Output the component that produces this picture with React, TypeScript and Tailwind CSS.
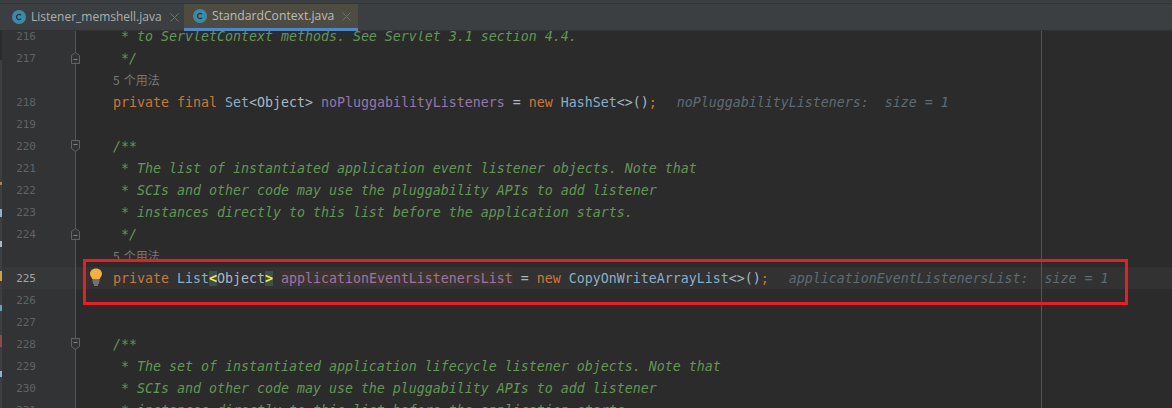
import React from "react";

const mono = "font-['DejaVu_Sans_Mono','Liberation_Mono',monospace]";

function FileIcon() {
  return (
    <svg width="14" height="14" viewBox="0 0 14 14" className="shrink-0">
      <circle cx="7" cy="7" r="7" fill="#3d8aa8" />
      <path d="M9 5.2A2.6 2.6 0 1 0 9 8.8" fill="none" stroke="#1f3a47" strokeWidth="1.3" />
    </svg>
  );
}

function CloseX() {
  return (
    <svg width="9" height="9" viewBox="0 0 9 9" className="shrink-0 block">
      <path d="M0.5 0.5L8.5 8.5M8.5 0.5L0.5 8.5" stroke="#6f7274" strokeWidth="1" />
    </svg>
  );
}

function Fold({ dir }: { dir: "up" | "down" }) {
  return (
    <svg width="9" height="12" viewBox="0 0 9 12" className="absolute left-[69px] top-[5px]">
      <path
        d={dir === "up" ? "M0.5 11.5V3.5L4.5 0.5L8.5 3.5V11.5Z" : "M0.5 0.5V8.5L4.5 11.5L8.5 8.5V0.5Z"}
        fill="#313335"
        stroke="#606366"
      />
      <path d={dir === "up" ? "M2.5 7.5H6.5" : "M2.5 4.5H6.5"} stroke="#808487" />
    </svg>
  );
}

function Bulb() {
  return (
    <svg width="14" height="18" viewBox="0 0 14 18" className="absolute left-[89px] top-[1px]">
      <path
        d="M7 0.5C3.3 0.5 1 3 1 5.8C1 8.4 3 9.6 3.6 11.5H10.4C11 9.6 13 8.4 13 5.8C13 3 10.7 0.5 7 0.5Z"
        fill="#f4af3d"
      />
      <path d="M3.5 13H10.5M4 15H10M5 17H9" stroke="#afb1b3" strokeWidth="1" />
    </svg>
  );
}

function Row({
  n,
  current,
  fold,
  children,
}: {
  n?: number;
  current?: boolean;
  fold?: "up" | "down";
  children?: React.ReactNode;
}) {
  return (
    <div className={`flex h-[22px] relative ${current ? "bg-[#323232]" : ""}`}>
      <div
        className={`w-[74px] shrink-0 border-r border-[#555555] h-full flex items-center pt-[2px] ${
          current ? "bg-[#353739]" : "bg-[#313335]"
        }`}
      >
        <span
          className={`w-[34px] text-right text-[11px] ${current ? "text-[#a4a3a3]" : "text-[#606366]"}`}
        >
          {n}
        </span>
      </div>
      {fold && <Fold dir={fold} />}
      <div className="pl-[37px] pt-[2px] h-full flex items-center text-[13.29px] text-[#a9b7c6]">
        <span className="whitespace-pre">{children}</span>
      </div>
    </div>
  );
}

const Doc = ({ t }: { t: string }) => <span className="italic text-[#629755]">{t}</span>;
const Kw = ({ t }: { t: string }) => <span className="text-[#cc7832]">{t}</span>;
const Cls = ({ t }: { t: string }) => <span className="text-[#88aecb]">{t}</span>;
const Field = ({ t }: { t: string }) => <span className="text-[#9876aa]">{t}</span>;
const Hint = ({ t }: { t: string }) => <span className="ml-5 italic text-[#5f6b73]">{t}</span>;
const Usage = () => (
  <div className="flex h-[22px]">
    <div className="w-[74px] shrink-0 border-r border-[#555555] bg-[#313335]" />
    <div className="pl-[37px] flex items-center gap-[4px] text-[12px] text-[#787878] font-['Noto_Sans_CJK_SC',sans-serif]">
      <span>5</span>
      <span>个用法</span>
    </div>
  </div>
);

export default function App() {
  return (
    <div className={`relative h-[408px] w-[1172px] overflow-hidden bg-[#2b2b2b] ${mono}`}>
      <div className="relative z-10 h-[31px] bg-[#3c3f41] border-t border-[#3c3f41]">
        <div className="h-px bg-[#323537] mt-[2px]" />
        <div className="flex h-[27px] border-b border-[#323232]">
          <div className="w-[184px] flex items-center pl-3 gap-[5px] font-['Open_Sans',sans-serif] text-[12px] text-[#a9afb3]">
            <FileIcon />
            <span>Listener_memshell.java</span>
            <span className="ml-[3px]"><CloseX /></span>
          </div>
          <div className="w-[174px] h-[27px] flex items-center pl-[9px] gap-[5px] bg-[#4e4c40] border-b-[3px] border-[#4a88c7] font-['Open_Sans',sans-serif] text-[12.2px] text-[#bbbbbb]">
            <FileIcon />
            <span>StandardContext.java</span>
            <span className="ml-[3px]"><CloseX /></span>
          </div>
        </div>
      </div>

      <div className="-mt-[6px] pl-[2px]">
        <Row n={216}><Doc t=" * to ServletContext methods. See Servlet 3.1 section 4.4." /></Row>
        <Row n={217} fold="up"><Doc t=" */" /></Row>
        <Usage />
        <Row n={218}>
          <Kw t="private final " /><Cls t="Set" />{"<Object> "}<Field t="noPluggabilityListeners" />
          {" = "}<Kw t="new " /><Cls t="HashSet" />{"<>()"}<Kw t=";" />
          <Hint t="noPluggabilityListeners:  size = 1" />
        </Row>
        <Row n={219} />
        <Row n={220} fold="down"><Doc t="/**" /></Row>
        <Row n={221}><Doc t=" * The list of instantiated application event listener objects. Note that" /></Row>
        <Row n={222}><Doc t=" * SCIs and other code may use the pluggability APIs to add listener" /></Row>
        <Row n={223}><Doc t=" * instances directly to this list before the application starts." /></Row>
        <Row n={224} fold="up"><Doc t=" */" /></Row>
        <Usage />
        <Row n={225} current>
          <Kw t="private " /><Cls t="List" />
          <span className="bg-[#3b514d] font-bold text-[#ffef28]">{"<"}</span>
          {"Object"}
          <span className="bg-[#3b514d] font-bold text-[#ffef28]">{">"}</span>
          {" "}
          <span className="bg-[#40332b] text-[#9876aa]">applicationEventListenersList</span>
          {" = "}<Kw t="new " /><Cls t="CopyOnWriteArrayList" />{"<>()"}<Kw t=";" />
          <Hint t="applicationEventListenersList:  size = 1" />
        </Row>
        <Row n={226} />
        <Row n={227} />
        <Row n={228} fold="down"><Doc t="/**" /></Row>
        <Row n={229}><Doc t=" * The set of instantiated application lifecycle listener objects. Note that" /></Row>
        <Row n={230}><Doc t=" * SCIs and other code may use the pluggability APIs to add listener" /></Row>
        <Row n={231}><Doc t=" * instances directly to this list before the application starts." /></Row>
      </div>

      <div className="absolute left-[1041px] top-[31px] bottom-0 w-px bg-[#555555]" />
      <div className="absolute left-0 top-[267px]">
        <div className="relative"><Bulb /></div>
      </div>
      <div className="absolute left-[83px] top-[259px] w-[1045px] h-[46px] border-[3px] border-[#ed1c24]" />

      <div className="absolute left-0 top-[60px] w-[2px] h-[348px] bg-[#3c3f41] flex flex-col gap-[24px] pt-[122px]">
        <div className="h-[3px] bg-[#c07a50]" />
        <div className="h-[8px] bg-[#8fb3cc]" />
        <div className="h-[6px] bg-[#a9b7c6]" />
        <div className="h-[10px] bg-[#c9a24a]" />
        <div className="h-[6px] bg-[#6a9fc0]" />
        <div className="h-[12px] bg-[#8f4a4a]" />
        <div className="h-[6px] bg-[#8fb3cc]" />
      </div>
    </div>
  );
}
